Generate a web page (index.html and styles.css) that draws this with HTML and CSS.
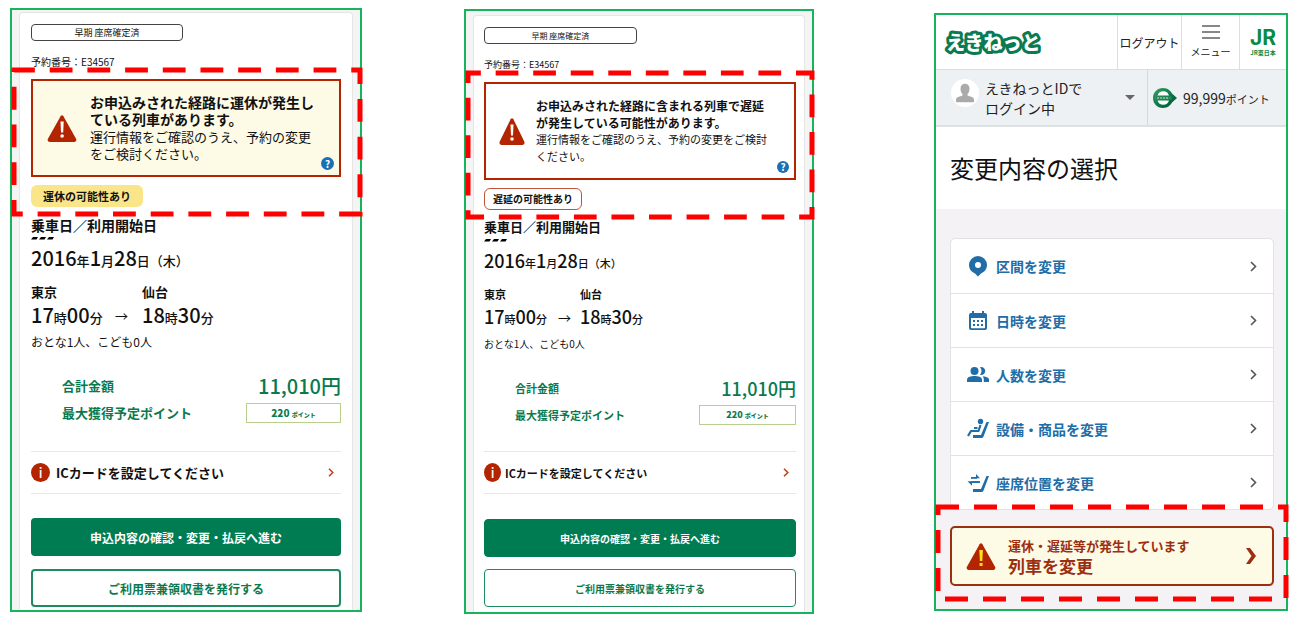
FILE: index.html
```html
<!DOCTYPE html>
<html lang="ja">
<head>
    <meta charset="UTF-8">
    <meta name="viewport" content="width=device-width, initial-scale=1.0">
    <title>えきねっと</title>
    <link rel="stylesheet" href="styles.css">
</head>
<body>
    <!-- Cancelled train -->
    <section class="screen screen-cancel">
        <div class="card">
            <span class="seat-badge">早期 座席確定済</span>
            <p class="booking-no">予約番号：E34567</p>
            <div class="alert alert-cancel">
                <svg class="alert-icon" viewBox="0 0 30 27"><path d="M13.600 1.200 Q15 -.5 16.400 1.200 L29.200 24 Q30 26.500 27.500 27 H2.500 Q0 26.500 .8 24 Z" fill="#b32500"/><path d="M13.500 6.500h3.200l-.5 11h-2.200z" fill="#fff"/><circle cx="15.100" cy="21" r="1.800" fill="#fff"/></svg>
                <div class="alert-text">
                    <strong>お申込みされた経路に運休が発生し<br>ている列車があります。</strong>
                    <p>運行情報をご確認のうえ、予約の変更<br>をご検討ください。</p>
                </div>
                <button class="help" type="button" aria-label="ヘルプ">?</button>
            </div>
            <span class="tag">運休の可能性あり</span>
            <h2>乗車日／利用開始日</h2>
            <svg class="ticks" viewBox="0 0 24 3"><path d="M2 0h5l-1.500 2.500H0zM10 0h5l-1.500 2.500H8zM18 0h5l-1.500 2.500H16z"/></svg>
            <p class="date">2016<small>年</small>1<small>月</small>28<small>日（木）</small></p>
            <div class="route">
                <span class="station">東京</span>
                <span class="station">仙台</span>
                <span class="time">17<small>時</small>00<small>分</small></span>
                <span class="arrow">→</span>
                <span class="time">18<small>時</small>30<small>分</small></span>
            </div>
            <p class="people">おとな1人、こども0人</p>
            <div class="fare">
                <span>合計金額</span><b class="price">11,010円</b>
            </div>
            <div class="fare fare-points">
                <span>最大獲得予定ポイント</span><b class="points">220 <small>ポイント</small></b>
            </div>
            <a class="ic-link" href="#">
                <span class="info">i</span>ICカードを設定してください
                <svg class="chevron" viewBox="0 0 6 9"><path d="M1 .8 4.800 4.500 1 8.200" fill="none" stroke="#c23a18" stroke-width="1.500"/></svg>
            </a>
            <button class="btn btn-main" type="button">申込内容の確認・変更・払戻へ進む</button>
            <button class="btn" type="button">ご利用票兼領収書を発行する</button>
        </div>
        <svg class="highlight"><rect width="100%" height="100%" pathLength="988"/></svg>
    </section>

    <!-- Delayed train -->
    <section class="screen screen-delay">
        <div class="card">
            <span class="seat-badge">早期 座席確定済</span>
            <p class="booking-no">予約番号：E34567</p>
            <div class="alert">
                <svg class="alert-icon" viewBox="0 0 26 27"><path d="M11.600 1.200 Q13 -.5 14.400 1.200 L25.500 24 Q26 26.500 23.500 27 H2.500 Q0 26.500 .5 24 Z" fill="#b32500"/><path d="M11.500 6.500h3l-.5 11h-2z" fill="#fff"/><circle cx="13" cy="21" r="1.800" fill="#fff"/></svg>
                <div class="alert-text">
                    <strong>お申込みされた経路に含まれる列車で遅延<br>が発生している可能性があります。</strong>
                    <p>運行情報をご確認のうえ、予約の変更をご検討<br>ください。</p>
                </div>
                <button class="help" type="button" aria-label="ヘルプ">?</button>
            </div>
            <span class="tag tag-outline">遅延の可能性あり</span>
            <h2>乗車日／利用開始日</h2>
            <svg class="ticks" viewBox="0 0 24 3"><path d="M2 0h5l-1.500 2.500H0zM10 0h5l-1.500 2.500H8zM18 0h5l-1.500 2.500H16z"/></svg>
            <p class="date">2016<small>年</small>1<small>月</small>28<small>日（木）</small></p>
            <div class="route">
                <span class="station">東京</span>
                <span class="station">仙台</span>
                <span class="time">17<small>時</small>00<small>分</small></span>
                <span class="arrow">→</span>
                <span class="time">18<small>時</small>30<small>分</small></span>
            </div>
            <p class="people">おとな1人、こども0人</p>
            <div class="fare">
                <span>合計金額</span><b class="price">11,010円</b>
            </div>
            <div class="fare fare-points">
                <span>最大獲得予定ポイント</span><b class="points">220 <small>ポイント</small></b>
            </div>
            <a class="ic-link" href="#">
                <span class="info">i</span>ICカードを設定してください
                <svg class="chevron" viewBox="0 0 6 9"><path d="M1 .8 4.800 4.500 1 8.200" fill="none" stroke="#c23a18" stroke-width="1.500"/></svg>
            </a>
            <button class="btn btn-main" type="button">申込内容の確認・変更・払戻へ進む</button>
            <button class="btn" type="button">ご利用票兼領収書を発行する</button>
        </div>
        <svg class="highlight"><rect width="100%" height="100%" pathLength="988"/></svg>
    </section>

    <!-- Change menu -->
    <section class="screen screen-menu">
        <header class="top">
            <a class="logo" href="#">
                <svg viewBox="0 0 98 30"><text x="3" y="23">えきねっと</text></svg>
            </a>
            <a class="top-item" href="#">ログアウト</a>
            <button class="top-item menu" type="button">
                <svg viewBox="0 0 18 14"><path d="M0 1h18M0 7h18M0 13h18" stroke="#888" stroke-width="2"/></svg>
                メニュー
            </button>
            <a class="top-item jr" href="#"><b>JR</b><small>JR東日本</small></a>
        </header>
        <div class="account">
            <button class="user" type="button">
                <svg class="avatar" viewBox="0 0 28 28"><circle cx="14" cy="14" r="14" fill="#fff"/><path d="M9.500 9.500a4.500 4.800 0 0 1 9 0c0 3-1 4.500-2 5.500v1.500l5 1.800c1 .5 1.500 1.500 1.500 3v2H5v-2c0-1.500.5-2.500 1.500-3l5-1.800V15c-1-1-2-2.500-2-5.500z" fill="#aaa"/></svg>
                <span>えきねっとIDで<br>ログイン中</span>
                <svg class="caret" viewBox="0 0 10 5"><path d="M0 0h10L5 5z" fill="#666"/></svg>
            </button>
            <div class="balance">
                <svg class="point-mark" viewBox="0 0 24 20">
                    <defs><linearGradient id="mark" x2="1" y2="1"><stop offset="0" stop-color="#35a064"/><stop offset=".6" stop-color="#087345"/><stop offset="1" stop-color="#064d31"/></linearGradient></defs>
                    <path d="M10 0c5 0 7.500 3 9 5.500L24 10l-5 4.500C17.500 17 15 20 10 20 4 20 0 15.500 0 10S4 0 10 0z" fill="url(#mark)"/>
                    <path d="M4.500 7.500a6 6 0 0 1 11.500 0zM4.500 12.500a6 6 0 0 0 11.500 0z" fill="#fff"/>
                    <path d="M1.500 8.500h17v3h-17z" fill="#2f8a5b"/><path d="M4 10h12" stroke="#b9dcc8" stroke-width="1" stroke-dasharray="2 1"/>
                </svg>
                <span>99,999<small>ポイント</small></span>
            </div>
        </div>
        <h1>変更内容の選択</h1>
        <div class="menu-body">
            <nav class="change-list">
                <a href="#">
                    <svg class="icon" viewBox="0 0 22 22"><path fill-rule="evenodd" d="M11 1a9 9 0 0 1 9 9c0 4-2.500 7-6 8.500L11 21.500 8 18.500C4.500 17 2 14 2 10a9 9 0 0 1 9-9zm0 6a3 3 0 1 0 0 6 3 3 0 0 0 0-6z"/></svg>
                    区間を変更
                    <svg class="chevron" viewBox="0 0 7 11"><path d="M1 1l4.500 4.500L1 10" fill="none" stroke="#555" stroke-width="1.600"/></svg>
                </a>
                <a href="#">
                    <svg class="icon" viewBox="0 0 22 22"><path fill-rule="evenodd" d="M5 1h2v2h8V1h2v2h1q2 0 2 2v13q0 2-2 2H4q-2 0-2-2V5q0-2 2-2h1zM4 8v9.500q0 .8.8.8h12.400q.8 0 .8-.8V8z"/><path d="M6 10h2v2H6zM10 10h2v2h-2zM14 10h2v2h-2zM6 14h2v2H6zM10 14h2v2h-2zM14 14h2v2h-2z"/></svg>
                    日時を変更
                    <svg class="chevron" viewBox="0 0 7 11"><path d="M1 1l4.500 4.500L1 10" fill="none" stroke="#555" stroke-width="1.600"/></svg>
                </a>
                <a href="#">
                    <svg class="icon" viewBox="0 0 22 22"><circle cx="7.500" cy="7" r="4"/><path d="M0 18v-2.500C0 13 4 12 7.500 12s7.500 1 7.500 3.500V18z"/><path d="M13 3.200a4 4 0 1 1 0 7.600 5.500 5.500 0 0 0 0-7.600zM15.500 12.200c3.500.3 6.500 1.300 6.500 3.300V18h-5.200v-2.500c0-1.300-.4-2.400-1.300-3.300z"/></svg>
                    人数を変更
                    <svg class="chevron" viewBox="0 0 7 11"><path d="M1 1l4.500 4.500L1 10" fill="none" stroke="#555" stroke-width="1.600"/></svg>
                </a>
                <a href="#">
                    <svg class="icon" viewBox="0 0 22 22"><circle cx="13.500" cy="3.500" r="2.700"/><path d="M13.500 7 11.500 13H4L1 18M10.500 10H7" fill="none" stroke="#206da8" stroke-width="2.200" stroke-linejoin="round"/><path d="M19.500 4H22l-5.500 14.500q-.5 1.500-2 1.500H6v-3h8z"/></svg>
                    設備・商品を変更
                    <svg class="chevron" viewBox="0 0 7 11"><path d="M1 1l4.500 4.500L1 10" fill="none" stroke="#555" stroke-width="1.600"/></svg>
                </a>
                <a href="#">
                    <svg class="icon" viewBox="0 0 22 22"><path d="M4 5h5V2l4 4.200H4zM13 10.800H5v3L.5 9.200H13z"/><path d="M4 5h6v1.800H4zM4 9.200h9V11H4z"/><path d="M19.500 4H22l-5.500 14.500q-.5 1.500-2 1.500H6v-3h8z"/></svg>
                    座席位置を変更
                    <svg class="chevron" viewBox="0 0 7 11"><path d="M1 1l4.500 4.500L1 10" fill="none" stroke="#555" stroke-width="1.600"/></svg>
                </a>
            </nav>
            <a class="train-change" href="#">
                <svg class="alert-icon" viewBox="0 0 30 27"><path d="M13.600 1.200 Q15 -.5 16.400 1.200 L29.200 24 Q30 26.500 27.500 27 H2.500 Q0 26.500 .8 24 Z" fill="#b32500"/><path d="M13.300 7h3.600l-.6 11h-2.400zM13.600 20h3v3h-3z" fill="#ffe11a"/></svg>
                <span><small>運休・遅延等が発生しています</small>列車を変更</span>
                <svg class="chevron" viewBox="0 0 10 16"><path d="M0 0h4l6 8-6 8H0l5.500-8z" fill="#9c2f0f"/></svg>
            </a>
        </div>
        <svg class="highlight"><rect width="100%" height="100%"/></svg>
    </section>
</body>
</html>
```
FILE: styles.css
```css
* { box-sizing: border-box; }
body {
    display: grid;
    grid-template-columns: 352fr 102fr 350fr 120fr 354fr;
    align-items: start;
    margin: 0;
    padding: 8px 17px 18px 10px;
    background: #fff;
    color: #111;
    font-family: "Noto Sans CJK JP", "Noto Sans", sans-serif;
}
p, h1, h2 { margin: 0; }
a { color: inherit; text-decoration: none; }
button { font-family: inherit; cursor: pointer; }
svg { display: block; flex: none; }

.screen { position: relative; grid-row: 1; border: 2px solid #16b45c; background: #f4f4f4; }
.screen-cancel { grid-column: 1; padding: 2px 7px 0; }
.screen-delay { grid-column: 3; margin-top: 1px; padding: 4px 7px 0; }
.screen-menu { grid-column: 5; margin-top: 5px; background: #f4f2f4; }

/* Red dashed frame over each screen */
.highlight { position: absolute; left: 2px; width: calc(100% - 2px); overflow: visible; pointer-events: none; }
.highlight rect { fill: none; stroke: #f00; stroke-width: 5px; stroke-dasharray: 23 15; stroke-dashoffset: 2px; }
.screen-cancel .highlight { top: 60px; height: 144px; }
.screen-delay .highlight { top: 62px; height: 144px; }
.screen-delay .highlight rect { stroke-dashoffset: 10px; }
.screen-menu .highlight { top: 492px; height: 92px; }

/* Booking card */
.card {
    display: flex;
    flex-direction: column;
    padding: 11px 11px 3px;
    border: 1px solid #e6e6e6;
    border-bottom: 0;
    border-radius: 4px 4px 0 0;
    background: #fff;
}
.seat-badge { width: 49%; border: 1px solid #444; border-radius: 4px; font-size: 9px; line-height: 15px; text-align: center; }
.booking-no { margin-top: 13px; font-size: 10px; line-height: 16px; }
.alert { position: relative; display: flex; align-items: center; gap: 13px; height: 98px; margin-top: 9px; padding-left: 14px; border: 2px solid #b32500; }
.alert-cancel { background: #fdfae6; }
.alert-icon { width: 30px; height: 27px; }
.alert-text { font-size: 13px; line-height: 17px; white-space: nowrap; }
.alert-text strong { display: block; font-size: 14px; }
.help { position: absolute; right: 5px; bottom: 5px; width: 13px; height: 13px; padding: 0; border: 0; border-radius: 50%; background: #1b6fb3; color: #fff; font-size: 10px; font-weight: bold; line-height: 13px; }
.tag { align-self: flex-start; margin-top: 8px; padding: 0 12px; border-radius: 6px; background: #fbe58a; font-size: 11px; font-weight: bold; line-height: 22px; }
.tag-outline { padding: 0 8px; border: 1px solid #c0533a; background: #fff; line-height: 20px; }
h2 { margin-top: 8px; font-size: 14px; font-weight: bold; line-height: 20px; }
.ticks { width: 24px; height: 3px; margin-top: 2px; }
.date { margin-top: 4px; font-size: 20px; font-weight: 500; line-height: 28px; }
.date small, .time small, .points small { font-size: 13px; line-height: 1; }
.route { display: grid; grid-template-columns: 84px 27px auto; justify-content: start; margin-top: 11px; font-weight: 500; }
.station { font-size: 13px; font-weight: bold; line-height: 18px; }
.station:nth-child(2) { grid-column: 3; }
.time { font-size: 20px; line-height: 27px; }
.arrow { font-size: 13px; font-weight: 400; line-height: 30px; }
.people { margin-top: 2px; font-size: 12px; line-height: 18px; }
.fare { display: flex; justify-content: space-between; align-items: center; margin-top: 22px; padding-left: 31px; color: #0a7a4e; font-size: 13px; font-weight: bold; line-height: 26px; }
.fare-points { margin-top: 4px; line-height: 20px; }
.price { font-size: 20px; font-weight: 500; }
.points { width: 95px; border: 1px solid #b9cf8e; font-size: 10px; line-height: 18px; text-align: center; }
.points small { font-size: 6px; }
.ic-link { display: flex; align-items: center; gap: 6px; height: 43px; margin-top: 28px; border: solid #e8e8e8; border-width: 1px 0; font-size: 13px; font-weight: bold; }
.ic-link .chevron { width: 6px; height: 9px; margin-left: auto; margin-right: 7px; }
.info { width: 19px; border-radius: 50%; background: #b32500; color: #fff; font-size: 13px; font-weight: 500; line-height: 19px; text-align: center; }
.btn { height: 38px; margin-top: 13px; padding: 0; border: 2px solid #1d8a5f; border-radius: 4px; background: #fff; color: #0a7a4e; font-size: 12px; font-weight: bold; }
.btn-main { margin-top: 24px; border-color: #007c52; background: #007c52; color: #fff; }

/* Smaller type on the delay screen */
.screen-delay .card { padding: 11px 8px 5px 10px; }
.screen-delay .seat-badge { font-size: 8px; }
.screen-delay .booking-no { font-size: 9px; }
.screen-delay .alert { gap: 11px; padding-left: 13px; }
.screen-delay .alert-icon { width: 26px; }
.screen-delay .alert-text { font-size: 11px; }
.screen-delay .alert-text strong { font-size: 12px; }
.screen-delay .help { width: 12px; height: 12px; line-height: 12px; }
.screen-delay .tag { font-size: 10px; }
.screen-delay h2 { margin-top: 7px; font-size: 13px; }
.screen-delay .date, .screen-delay .time, .screen-delay .price { font-size: 18px; }
.screen-delay .date small, .screen-delay .time small { font-size: 11px; }
.screen-delay .route { grid-template-columns: 74px 22px auto; }
.screen-delay .station, .screen-delay .fare, .screen-delay .ic-link { font-size: 11px; }
.screen-delay .people { font-size: 10px; }
.screen-delay .points { width: 97px; font-size: 9px; }
.screen-delay .points small { font-size: 6px; }
.screen-delay .ic-link { gap: 4px; margin-top: 26px; }
.screen-delay .info { width: 17px; }
.screen-delay .btn { margin-top: 12px; border-width: 1px; font-size: 10px; }
.screen-delay .btn-main { margin-top: 25px; }

/* Change menu screen */
.top { display: grid; grid-template-columns: 1fr 64px 58px 47px; height: 55px; border-bottom: 1px solid #d9dee0; background: #fff; }
.logo { align-self: center; padding-left: 7px; }
.logo svg { width: 98px; height: 30px; }
.logo text { fill: #fff; stroke: #0a7a52; stroke-width: 6px; stroke-linejoin: round; paint-order: stroke; font-size: 19px; font-weight: 900; }
.top-item { display: flex; flex-direction: column; align-items: center; justify-content: center; padding: 0; border: 0; border-left: 1px solid #dcdfe0; background: #fff; color: #222; font-size: 12px; }
.menu { gap: 5px; font-size: 10px; line-height: 15px; }
.menu svg { width: 18px; height: 14px; }
.jr { color: #0a8a43; }
.jr b { font-family: Inter, sans-serif; font-size: 21px; line-height: 22px; }
.jr small { font-size: 6px; font-weight: bold; line-height: 8px; }
.account { display: grid; grid-template-columns: 1fr 139px; height: 57px; border-bottom: 2px solid #dde1e4; background: #edf1f4; color: #222; }
.user { display: flex; align-items: center; gap: 6px; padding: 0 12px 0 15px; border: 0; background: none; color: inherit; font-size: 14px; line-height: 20px; text-align: left; }
.avatar { width: 28px; height: 28px; margin-bottom: 10px; }
.caret { width: 10px; height: 5px; margin-left: auto; }
.balance { display: flex; align-items: center; gap: 6px; padding-left: 5px; border-left: 1px solid #d4d9dc; font-size: 14px; white-space: nowrap; }
.balance small { font-size: 11px; }
.point-mark { width: 24px; height: 20px; }
h1 { padding: 23px 14px 24px; background: #fff; font-size: 24px; font-weight: 400; line-height: 35px; }
.menu-body { padding: 29px 12px 23px 14px; }
.change-list { border: 1px solid #e0e2e3; border-radius: 5px; background: #fff; }
.change-list a { display: flex; align-items: center; gap: 7px; height: 54px; padding: 0 16px; color: #206da8; font-size: 14px; font-weight: bold; }
.change-list a + a { border-top: 1px solid #e0e2e3; }
.icon { width: 22px; height: 22px; fill: #206da8; }
.chevron { margin-left: auto; }
.change-list .chevron { width: 7px; height: 11px; }
.train-change { display: flex; align-items: center; gap: 12px; height: 60px; margin-top: 16px; padding: 0 16px 0 14px; border: 2px solid #9c2f0f; border-radius: 5px; background: #fdfae6; color: #9c2f0f; font-size: 17px; font-weight: bold; line-height: 20px; }
.train-change small { display: block; font-size: 13px; }
.train-change .chevron { width: 10px; height: 16px; }
```
